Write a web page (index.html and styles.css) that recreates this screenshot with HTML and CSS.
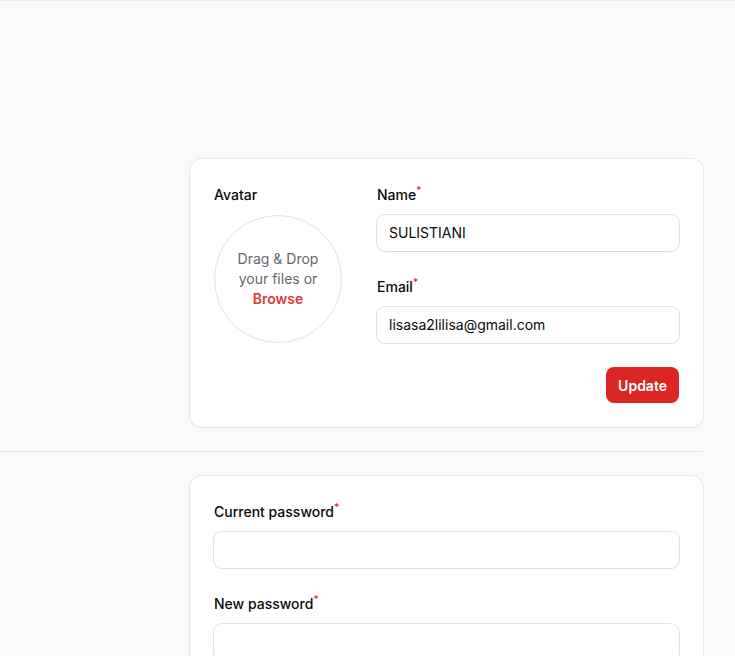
FILE: index.html
```html
<!DOCTYPE html>
<html lang="en">
<head>
<meta charset="utf-8">
<title>Profile</title>
<link rel="stylesheet" href="styles.css">
</head>
<body>
<div class="topline"></div>
<main class="page">
  <section class="row">
    <div class="aside"></div>
    <div class="card">
      <div class="grid3">
        <div class="field">
          <label class="label">Avatar</label>
          <div class="avatar">
            <span>Drag &amp; Drop</span>
            <span>your files or</span>
            <span class="browse">Browse</span>
          </div>
        </div>
        <div class="col2">
          <div class="field">
            <label class="label">Name<sup class="req">*</sup></label>
            <div class="input">SULISTIANI</div>
          </div>
          <div class="field">
            <label class="label">Email<sup class="req">*</sup></label>
            <div class="input">lisasa2lilisa@gmail.com</div>
          </div>
        </div>
      </div>
      <div class="actions"><button class="btn">Update</button></div>
    </div>
  </section>
  <hr class="divider">
  <section class="row">
    <div class="aside"></div>
    <div class="card">
      <div class="stack">
        <div class="field">
          <label class="label">Current password<sup class="req">*</sup></label>
          <div class="input"></div>
        </div>
        <div class="field">
          <label class="label">New password<sup class="req">*</sup></label>
          <div class="input"></div>
        </div>
      </div>
    </div>
  </section>
</main>
</body>
</html>
```
FILE: styles.css
```css
* { box-sizing: border-box; }
html, body { margin: 0; padding: 0; }
body {
  background: #fafafa;
  font-family: Inter, "Liberation Sans", sans-serif;
  color: #0a0a0a;
  font-size: 14px;
  overflow: hidden;
  height: 656px;
}
.topline { height: 1px; background: #ededed; }
.page {
  width: 703px;
  padding-top: 158px;
}
.row {
  display: grid;
  grid-template-columns: 166px 1fr;
  column-gap: 24px;
}
.card {
  background: #fff;
  border-radius: 12px;
  box-shadow: 0 0 0 1px rgba(10,10,10,0.07), 0 1px 2px rgba(0,0,0,0.03);
  padding: 24px;
}
.grid3 {
  display: grid;
  grid-template-columns: repeat(3, 1fr);
  column-gap: 24px;
}
.col2 {
  grid-column: span 2;
  display: flex;
  flex-direction: column;
  gap: 24px;
}
.stack { display: flex; flex-direction: column; gap: 24px; }
.field { display: flex; flex-direction: column; gap: 8px; }
.label {
  font-size: 14px;
  font-weight: 500;
  line-height: 24px;
  color: #0a0a0a;
}
.req {
  color: #dc2626;
  font-weight: 500;
  font-size: 10px;
  line-height: 0;
  vertical-align: 0;
  position: relative;
  top: -6px;
}
.input {
  height: 36px;
  border-radius: 8px;
  background: #fff;
  box-shadow: 0 0 0 1px rgba(10,10,10,0.11), 0 1px 2px rgba(0,0,0,0.04);
  padding: 6px 12px;
  line-height: 24px;
  font-size: 14px;
  color: #0a0a0a;
}
.avatar {
  width: 128px;
  height: 128px;
  border-radius: 50%;
  border: 1px solid #e3e3e3;
  background: #fff;
  display: flex;
  flex-direction: column;
  align-items: center;
  justify-content: center;
  color: #66666e;
  font-size: 14px;
  line-height: 20px;
  text-align: center;
}
.browse { color: #dc3b2f; font-weight: 600; }
.actions {
  display: flex;
  justify-content: flex-end;
  margin-top: 24px;
}
.btn {
  height: 36px;
  border: none;
  border-radius: 8px;
  background: #dc2626;
  color: #fff;
  font-family: Inter, "Liberation Sans", sans-serif;
  font-size: 14px;
  font-weight: 600;
  padding: 0 12px;
  box-shadow: 0 1px 2px rgba(0,0,0,0.05);
}
.divider {
  border: none;
  height: 1px;
  background: #e5e5e5;
  margin: 24px 0 24px;
}
```
